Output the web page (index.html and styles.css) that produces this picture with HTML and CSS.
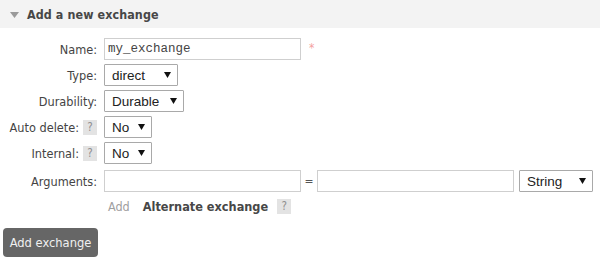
FILE: index.html
```html
<!DOCTYPE html>
<html>
<head>
<meta charset="utf-8">
<link rel="stylesheet" href="styles.css">
</head>
<body>
<div class="section-header">
  <svg class="caret" width="9" height="6" viewBox="0 0 9 6"><polygon points="0,0 9,0 4.5,6" fill="#9a9a9a"/></svg>
  <span class="section-title">Add a new exchange</span>
</div>
<div class="form">
  <div class="label">Name:</div>
  <div class="value"><div class="text-input name-input">my_exchange</div><span class="required">*</span></div>

  <div class="label">Type:</div>
  <div class="value"><div class="select w-type"><span>direct</span><svg class="arrow" width="7" height="6" viewBox="0 0 7 6"><polygon points="0,0 7,0 3.5,6" fill="#111"/></svg></div></div>

  <div class="label">Durability:</div>
  <div class="value"><div class="select w-dur"><span>Durable</span><svg class="arrow" width="7" height="6" viewBox="0 0 7 6"><polygon points="0,0 7,0 3.5,6" fill="#111"/></svg></div></div>

  <div class="label">Auto delete: <span class="help">?</span></div>
  <div class="value"><div class="select w-no"><span>No</span><svg class="arrow" width="7" height="6" viewBox="0 0 7 6"><polygon points="0,0 7,0 3.5,6" fill="#111"/></svg></div></div>

  <div class="label">Internal: <span class="help">?</span></div>
  <div class="value"><div class="select w-no"><span>No</span><svg class="arrow" width="7" height="6" viewBox="0 0 7 6"><polygon points="0,0 7,0 3.5,6" fill="#111"/></svg></div></div>

  <div class="label args">Arguments:</div>
  <div class="value args"><div class="text-input arg-input"></div><span class="eq">=</span><div class="text-input arg-input"></div><div class="select w-type string-sel"><span>String</span><svg class="arrow" width="7" height="6" viewBox="0 0 7 6"><polygon points="0,0 7,0 3.5,6" fill="#111"/></svg></div></div>

  <div class="label"></div>
  <div class="value add-row"><span class="add-link">Add</span><span class="alt">Alternate exchange</span><span class="help">?</span></div>
</div>
<div class="button-row"><span class="button">Add exchange</span></div>
</body>
</html>
```
FILE: styles.css
```css
html, body {
  margin: 0;
  padding: 0;
  background: #fff;
  width: 600px;
  height: 260px;
  overflow: hidden;
}
body {
  font-family: "DejaVu Sans Condensed", "DejaVu Sans", sans-serif;
  color: #484848;
  font-size: 12px;
}
.section-header {
  height: 28px;
  background: #f3f3f3;
  display: flex;
  align-items: center;
  padding-left: 10px;
  gap: 8px;
}
.caret { margin-top: 1px; }
.section-title {
  font-weight: bold;
  font-size: 12.4px;
  color: #474747;
  letter-spacing: 0.1px;
}
.form {
  margin-top: 10px;
  display: grid;
  grid-template-columns: 97px 1fr;
  column-gap: 7px;
  row-gap: 4px;
}
.label {
  display: flex;
  justify-content: flex-end;
  align-items: center;
  gap: 4px;
  font-size: 12.6px;
  color: #444;
  height: 22px;
}
.value {
  display: flex;
  align-items: center;
  height: 22px;
}
.args { margin-top: 2px; }
.text-input {
  box-sizing: border-box;
  height: 22px;
  border: 1px solid #cfcfcf;
  background: #fff;
  display: flex;
  align-items: center;
  padding-left: 3px;
}
.name-input {
  width: 197px;
  font-family: "Liberation Mono", monospace;
  font-size: 12.5px;
  color: #444;
}
.required {
  color: #f4a0a0;
  margin-left: 8px;
  font-size: 12px;
  margin-top: -3px;
}
.select {
  box-sizing: border-box;
  height: 22px;
  border: 1px solid #a9a9a9;
  border-radius: 1px;
  background: #fff;
  display: flex;
  align-items: center;
  justify-content: space-between;
  padding: 0 6px 0 7px;
  font-family: "Liberation Sans", Arial, sans-serif;
  font-size: 13.5px;
  color: #222;
}
.w-type { width: 74px; }
.w-dur { width: 80px; }
.w-no { width: 48px; }
.arrow { flex: none; }
.help {
  display: inline-flex;
  justify-content: center;
  align-items: center;
  width: 14px;
  height: 15px;
  background: #e3e3e3;
  color: #8f8f8f;
  font-size: 11.5px;
}
.arg-input { width: 197px; }
.eq {
  width: 16px;
  text-align: center;
  font-size: 12px;
  color: #555;
}
.string-sel { margin-left: 5px; }
.add-row { margin-top: 1px; height: 18px; }
.add-link {
  color: #a0a0a0;
  font-size: 12.5px;
  margin-left: 4px;
  margin-right: 13px;
}
.alt {
  font-weight: bold;
  font-size: 12.6px;
  color: #474747;
  margin-right: 9px;
}
.button-row {
  margin-top: 10px;
  padding-left: 3px;
}
.button {
  display: inline-flex;
  align-items: center;
  justify-content: center;
  width: 95px;
  height: 29px;
  background: #666;
  border-radius: 4px;
  color: #f0f0f0;
  font-size: 12.8px;
}
```
